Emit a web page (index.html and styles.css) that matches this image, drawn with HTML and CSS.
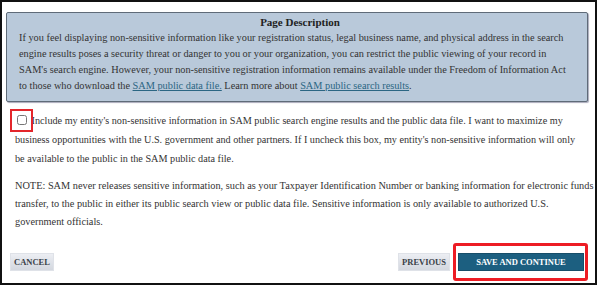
FILE: index.html
```html
<!DOCTYPE html>
<html lang="en">
<head>
<meta charset="utf-8">
<title>Page Description</title>
<link rel="stylesheet" href="styles.css">
</head>
<body>
<div class="frame">
<div class="desc">
<div class="desc-title">Page Description</div>
<p>If you feel displaying non-sensitive information like your registration status, legal business name, and physical address in the search<br>
engine results poses a security threat or danger to you or your organization, you can restrict the public viewing of your record in<br>
SAM's search engine. However, your non-sensitive registration information remains available under the Freedom of Information Act<br>
to those who download the <a href="#">SAM public data file.</a> Learn more about <a href="#">SAM public search results</a>.</p>
</div>
<p class="opt"><span class="mark"></span><input type="checkbox" class="chk"> Include my entity's non-sensitive information in SAM public search engine results and the public data file. I want to maximize my<br>
business opportunities with the U.S. government and other partners. If I uncheck this box, my entity's non-sensitive information will only<br>
be available to the public in the SAM public data file.</p>
<p class="note">NOTE: SAM never releases sensitive information, such as your Taxpayer Identification Number or banking information for electronic funds<br>
transfer, to the public in either its public search view or public data file. Sensitive information is only available to authorized U.S.<br>
government officials.</p>
<div class="actions">
<button class="btn">CANCEL</button>
<div class="right">
<button class="btn">PREVIOUS</button>
<span class="hilite"><button class="btn primary">SAVE AND CONTINUE</button></span>
</div>
</div>
</div>
</body>
</html>
```
FILE: styles.css
```css
body {
margin: 0;
background: #fff;
font-family: "Liberation Serif", "DejaVu Serif", serif;
color: #333;
}
.frame {
width: 597px;
height: 285px;
box-sizing: border-box;
border: 2px solid #111;
padding: 10px 7px 0 4px;
display: flex;
flex-direction: column;
overflow: hidden;
}
.desc {
background: #b9c9da;
border: 1px solid #5f6b78;
border-radius: 2px;
box-shadow: 1px 1px 1px #aab;
padding: 1px 6px 7px 12px;
font-size: 10.3px;
line-height: 16px;
}
.desc-title {
text-align: center;
font-weight: bold;
font-size: 11px;
color: #222;
}
.desc p {
margin: 0;
white-space: nowrap;
}
.desc a {
color: #2b6683;
}
.opt, .note {
margin: 0;
padding-left: 9px;
font-size: 10.3px;
white-space: nowrap;
}
.opt {
position: relative;
margin-top: 9px;
line-height: 19px;
font-size: 10.2px;
}
.chk {
margin: 0 2px 0 2px;
width: 10px;
height: 10px;
vertical-align: -1px;
}
.mark {
position: absolute;
left: 4px;
top: -2px;
width: 19px;
height: 19px;
border: 2px solid #e3262b;
}
.note {
margin-top: 9px;
line-height: 18px;
}
.actions {
margin-top: auto;
display: flex;
justify-content: space-between;
align-items: center;
padding-left: 4px;
padding-bottom: 2px;
}
.right {
display: flex;
align-items: center;
gap: 3px;
}
.btn {
font-family: "Liberation Serif", serif;
font-size: 8.5px;
font-weight: bold;
color: #3a3f48;
background: linear-gradient(#eceef3, #d3d7df);
border: 1px solid #dfe2e8;
padding: 0 3px;
height: 18px;
}
.primary {
background: #1c5f80;
color: #fff;
border: 1px solid #174e69;
width: 126px;
}
.hilite {
display: inline-block;
border: 3px solid #ed1c24;
border-radius: 3px;
padding: 5px 1px 7px 2px;
}
```
